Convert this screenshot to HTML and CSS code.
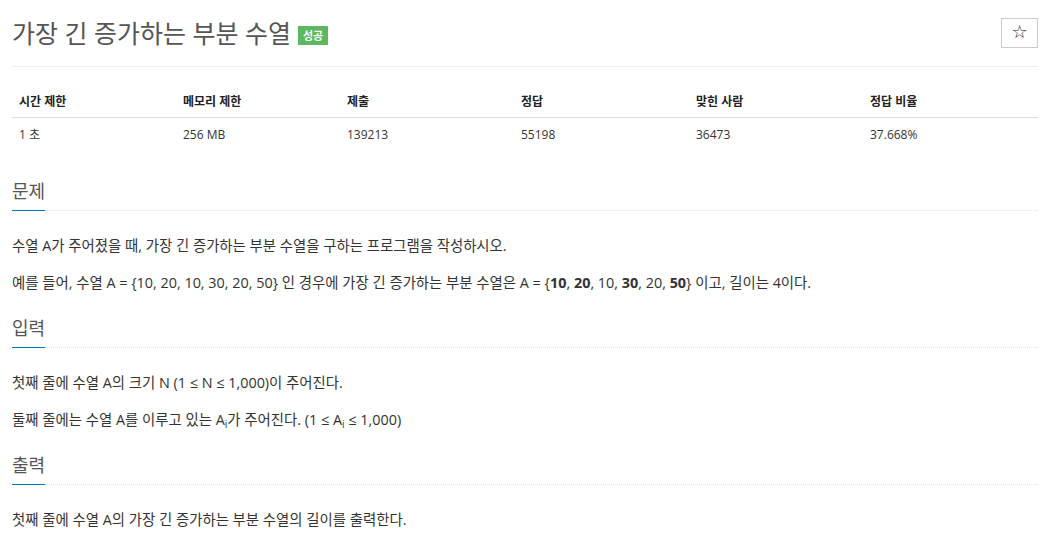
FILE: index.html
```html
<!DOCTYPE html>
<html lang="ko">
<head>
<meta charset="utf-8">
<title>가장 긴 증가하는 부분 수열</title>
<link rel="stylesheet" href="styles.css">
</head>
<body>
<div class="container">
  <div class="page-header">
    <h1 class="title">가장 긴 증가하는 부분 수열 <span class="badge">성공</span></h1>
    <button class="star-btn" type="button">☆</button>
  </div>

  <table class="info">
    <thead>
      <tr>
        <th class="c1">시간 제한</th>
        <th class="c2">메모리 제한</th>
        <th class="c3">제출</th>
        <th class="c4">정답</th>
        <th class="c5">맞힌 사람</th>
        <th class="c6">정답 비율</th>
      </tr>
    </thead>
    <tbody>
      <tr>
        <td>1 초</td>
        <td>256 MB</td>
        <td>139213</td>
        <td>55198</td>
        <td>36473</td>
        <td>37.668%</td>
      </tr>
    </tbody>
  </table>

  <section class="problem-section first">
    <div class="headline"><h2><span>문제</span></h2></div>
    <p>수열 A가 주어졌을 때, 가장 긴 증가하는 부분 수열을 구하는 프로그램을 작성하시오.</p>
    <p>예를 들어, 수열 A = {10, 20, 10, 30, 20, 50} 인 경우에 가장 긴 증가하는 부분 수열은 A = {<b>10</b>, <b>20</b>, 10, <b>30</b>, 20, <b>50</b>} 이고, 길이는 4이다.</p>
  </section>

  <section class="problem-section">
    <div class="headline"><h2><span>입력</span></h2></div>
    <p>첫째 줄에 수열 A의 크기 N (1 ≤ N ≤ 1,000)이 주어진다.</p>
    <p>둘째 줄에는 수열 A를 이루고 있는 A<sub>i</sub>가 주어진다. (1 ≤ A<sub>i</sub> ≤ 1,000)</p>
  </section>

  <section class="problem-section">
    <div class="headline"><h2><span>출력</span></h2></div>
    <p>첫째 줄에 수열 A의 가장 긴 증가하는 부분 수열의 길이를 출력한다.</p>
  </section>
</div>
</body>
</html>
```

FILE: styles.css
```css
* { box-sizing: border-box; }

html, body {
  margin: 0;
  padding: 0;
  background: #fff;
}

body {
  font-family: "Open Sans", "Noto Sans CJK KR", sans-serif;
  color: #333;
  font-size: 13px;
}

.container {
  width: 1026px;
  margin: 0 12px;
}

.page-header {
  display: flex;
  align-items: center;
  justify-content: space-between;
  margin-top: 18px;
  height: 30px;
  margin-bottom: 18px;
}

.title {
  margin: 0;
  font-size: 25px;
  font-weight: 400;
  line-height: 28px;
  color: #555;
  display: flex;
  align-items: center;
}

.badge {
  display: inline-block;
  background: #5cb85c;
  color: #fff;
  font-size: 11px;
  font-weight: 700;
  line-height: 19px;
  height: 19px;
  padding: 0 5px;
  margin-left: 7px;
  margin-top: 5px;
}

.star-btn {
  width: 37px;
  height: 30px;
  border: 1px solid #ccc;
  background: #fff;
  color: #222;
  font-size: 18px;
  line-height: 1;
  padding: 0 0 2px;
  font-family: "DejaVu Sans", sans-serif;
  cursor: pointer;
}

.info {
  width: 1026px;
  border-collapse: collapse;
  border-top: 1px solid #eee;
  table-layout: fixed;
}

.info th, .info td {
  text-align: left;
  padding: 8px 7px;
  line-height: 17px;
  font-size: 12px;
}

.info th {
  font-weight: 700;
  padding-top: 26px;
  padding-bottom: 7px;
  border-bottom: 1px solid #ddd;
  color: #222;
}

.info td {
  color: #333;
}

.c1, .c2 { width: 164px; }
.c3 { width: 174px; }
.c4 { width: 175px; }
.c5 { width: 174px; }
.c6 { width: 175px; }

.problem-section {
  margin-top: 23px;
}

.problem-section.first {
  margin-top: 28px;
}

.headline {
  border-bottom: 1px dotted #e0e0e0;
  margin-bottom: 25px;
}

.headline h2 {
  margin: 0;
  font-size: 18px;
  font-weight: 400;
  line-height: 24px;
  color: #555;
  display: flex;
}

.headline h2 span {
  display: inline-block;
  padding-bottom: 7px;
  border-bottom: 1px solid #0076c0;
  margin-bottom: -1px;
}

.problem-section p {
  margin: 0 0 17px;
  font-size: 14.4px;
  line-height: 20px;
  color: #333;
}

.problem-section p b {
  font-weight: 700;
}

sub {
  font-size: 10px;
  line-height: 0;
  vertical-align: -3px;
}
```
